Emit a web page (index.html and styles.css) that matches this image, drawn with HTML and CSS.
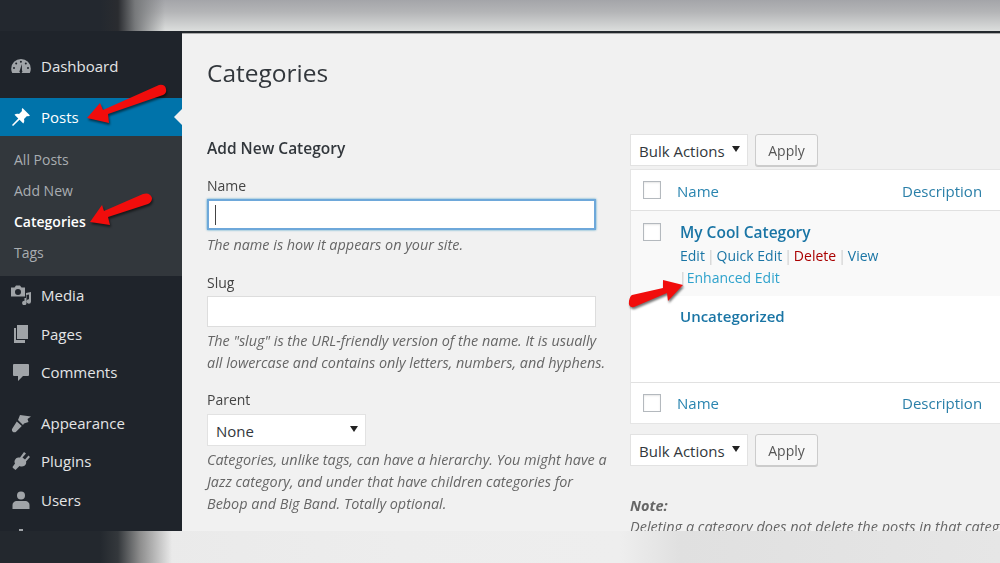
FILE: index.html
```html
<!DOCTYPE html>
<html lang="en">
<head>
<meta charset="utf-8">
<title>Categories</title>
<link rel="stylesheet" href="styles.css">
</head>
<body>
<div class="frame">
  <div class="band band-top"></div>
  <div class="app">
    <aside class="side">
      <ul class="menu menu-a">
        <li class="item"><svg class="ic" viewBox="0 0 20 20"><path fill-rule="evenodd" d="M10 3a9.800 9.800 0 0 0-9.800 9.800c0 1.600.4 3 1 4.200h17.600c.6-1.200 1-2.600 1-4.200A9.800 9.800 0 0 0 10 3zM9.900 4.800a1 1 0 1 1 0 2 1 1 0 0 1 0-2zM5.200 6.600a1 1 0 1 1 0 2 1 1 0 0 1 0-2zm9.600 0a1 1 0 1 1 0 2 1 1 0 0 1 0-2zM3 11a1 1 0 1 1 0 2 1 1 0 0 1 0-2zm14 0a1 1 0 1 1 0 2 1 1 0 0 1 0-2zM10.800 8l.2 6.500a1.500 1.500 0 1 1-2.200 0z"/></svg>Dashboard</li>
      </ul>
      <div class="active"><svg class="ic" viewBox="0 0 20 20"><path d="M11.500 1 19 8.500c-1 .8-2.200.8-3 .5l-3 3c.6 2 .2 3.400-.7 4.500L8.500 12.700 2 19l-1-1 6.300-6.500L3.500 7.700c1.100-.9 2.500-1.300 4.500-.7l3-3c-.3-.8-.3-2 .500-3z"/></svg>Posts</div>
      <ul class="sub">
        <li>All Posts</li>
        <li>Add New</li>
        <li class="cur">Categories</li>
        <li>Tags</li>
      </ul>
      <ul class="menu menu-b">
        <li class="item"><svg class="ic" viewBox="0 0 20 20"><path fill-rule="evenodd" d="M0 2.500h3.500L5 .5h4l1.500 2H14v9H0zM7 4a3 3 0 1 0 0 6 3 3 0 0 0 0-6zM20 7v9.500a2.200 2.200 0 1 1-2-2.200V9.500l-2.500.5v8a2.200 2.200 0 1 1-2-2.200V13H15V8z"/></svg>Media</li>
        <li class="item"><svg class="ic" viewBox="0 0 20 20"><path d="M6 1h11v14H6zM3 4h2v12h9v3H3z"/></svg>Pages</li>
        <li class="item"><svg class="ic" viewBox="0 0 20 20"><path d="M3 2h14a1 1 0 0 1 1 1v10a1 1 0 0 1-1 1h-5l-5 5v-5H3a1 1 0 0 1-1-1V3a1 1 0 0 1 1-1z"/></svg>Comments</li>
      </ul>
      <ul class="menu menu-c">
        <li class="item"><svg class="ic" viewBox="0 0 20 20"><path d="M9 2l11 1.500-3.500 2.500 1 3-4.500 1.500-1 1.500-5-5zM5.800 8.500l5 4.500-1.500 1.500-4.500 4.500c-1 .6-2.500.4-3.300-.5-.8-1-.8-2.200 0-3.200z"/></svg>Appearance</li>
        <li class="item"><svg class="ic" viewBox="0 0 20 20"><path d="M13 1l2 1.500-3.500 4 2.500 2 3.500-4L19 6l-4 4.500c.5 1.500 0 3-1.500 4.300-1.500 1-3.500 1-5 .2L4.500 19 2 17l-.5-1L4 12.500c-1-1.500-.5-3.500 1-5 1-1 2.500-1.200 4-1z"/></svg>Plugins</li>
        <li class="item"><svg class="ic" viewBox="0 0 20 20"><circle cx="10" cy="5.500" r="4"/><path d="M1.500 19v-4c0-2 1.500-3.500 3.500-4h10c2 .5 3.500 2 3.500 4v4z"/></svg>Users</li>
        <li class="item"><svg class="ic" viewBox="0 0 20 20"><path d="M8 1h4v4H8zM4 5h12v14H4z"/></svg></li>
      </ul>
    </aside>
    <main class="content">
      <h1 class="title">Categories</h1>
      <div class="cols">
        <section class="form">
          <h2 class="form-head">Add New Category</h2>
          <div class="field">
            <label class="lbl">Name</label>
            <div class="input focus"><span class="caret"></span></div>
            <p class="hint hint-name">The name is how it appears on your site.</p>
          </div>
          <div class="field field-slug">
            <label class="lbl">Slug</label>
            <div class="input"></div>
            <p class="hint">The "slug" is the URL-friendly version of the name. It is usually all lowercase and contains only letters, numbers, and hyphens.</p>
          </div>
          <div class="field">
            <label class="lbl">Parent</label>
            <div class="select parent">None<span class="tri"></span></div>
            <p class="hint">Categories, unlike tags, can have a hierarchy. You might have a Jazz category, and under that have children categories for Bebop and Big Band. Totally optional.</p>
          </div>
        </section>
        <section class="list">
          <div class="bulk">
            <div class="select bulk-sel">Bulk Actions<span class="tri"></span></div>
            <div class="btn">Apply</div>
          </div>
          <div class="table">
            <div class="row head"><span class="cb"></span><span class="col-name">Name</span><span class="col-desc">Description</span></div>
            <div class="row cat hl">
              <span class="cb"></span>
              <div class="cat-body">
                <a class="cat-name">My Cool Category</a>
                <div class="acts first"><a>Edit</a><i>|</i><a>Quick Edit</a><i>|</i><a class="del">Delete</a><i>|</i><a>View</a></div>
                <div class="acts"><i class="lead">|</i><a class="light">Enhanced Edit</a></div>
              </div>
            </div>
            <div class="row cat plain">
              <div class="cat-body"><a class="cat-name">Uncategorized</a></div>
            </div>
            <div class="row foot"><span class="cb"></span><span class="col-name">Name</span><span class="col-desc">Description</span></div>
          </div>
          <div class="bulk bulk-2">
            <div class="select bulk-sel">Bulk Actions<span class="tri"></span></div>
            <div class="btn">Apply</div>
          </div>
          <p class="note"><b>Note:</b><br>Deleting a category does not delete the posts in that category. Instead, posts that were only assigned</p>
        </section>
      </div>
    </main>
    <svg class="arrow a1" viewBox="0 0 90 50"><path d="M7 38 20 23l3 7L79 5q6-1 7 4 1 4-3 6L28 34l1 9z"/></svg>
    <svg class="arrow a2" viewBox="0 0 70 40"><path d="M5 32 17 15l2 6L58 4q7-2 9 4 0 4-4 6L23 27l2 8z"/></svg>
    <svg class="arrow a3" viewBox="0 0 60 34"><path d="M4 15 35 8V0l20 5-15 16-1-8L6 27q-6 1-5-6 1-5 3-6z"/></svg>
  </div>
  <div class="band band-bottom"></div>
</div>
</body>
</html>
```
FILE: styles.css
```css
* { box-sizing: border-box; }
html, body { margin: 0; padding: 0; }
body { width: 1000px; height: 563px; overflow: hidden; background: #f1f1f1; font-family: "Open Sans", "Noto Sans", sans-serif; font-size: 14px; color: #444; }
ul { list-style: none; margin: 0; padding: 0; }
h1, h2, p { margin: 0; font-weight: 400; }
.frame { width: 1000px; height: 563px; display: flex; flex-direction: column; }
.band { flex: none; }
.band-top { height: 31px; background: linear-gradient(90deg, #23282f 0, #23282f 100px, #2a2c30 118px, #77797b 135px, rgba(150,152,154,0) 165px), linear-gradient(180deg, #a4a5a9 0, #b4b5b7 12px, #dcdedd 31px); }
.band-bottom { height: 32px; background: linear-gradient(90deg, #23282e 0, #23282e 100px, #34383c 118px, #8d8d8d 140px, rgba(232,232,232,0) 172px), linear-gradient(90deg, #e8e8e8 0, #ededed 400px, #eeeeee 620px, #e0e0e0 680px, #e6e6e6 1000px); }
.app { flex: none; height: 500px; display: flex; position: relative; overflow: hidden; filter: blur(.4px); }
.side { flex: none; width: 182px; overflow: hidden; background: #1f242b; color: #e4e5e6; font-size: 15px; }
.item, .active { display: flex; align-items: center; gap: 10px; height: 38.500px; padding-left: 11px; }
.ic { flex: none; width: 20px; height: 20px; fill: #a0a4a8; }
.menu-a { padding-top: 16px; padding-bottom: 12.500px; }
.active { position: relative; height: 38px; background: #0073aa; color: #fff; }
.active .ic { fill: #fff; }
.active::after { content: ""; position: absolute; right: 0; top: 11px; border: 8px solid transparent; border-right-color: #f1f1f1; border-left-width: 0; }
.sub { background: #32373c; color: #a9adb1; font-size: 14px; height: 140px; padding: 8px 0 0 14px; }
.sub li { height: 31px; line-height: 31px; }
.sub .cur { color: #fff; font-weight: 600; }
.menu-c { padding-top: 12px; }
.content { flex: 1; min-width: 0; border-top: 2px solid #23282d; box-shadow: inset 0 1px 0 #aaa; padding: 0 0 0 25px; overflow: hidden; }
.title { font-size: 24.500px; color: #32373c; line-height: 30px; margin-top: 25px; }
.cols { display: flex; gap: 20px; margin-top: 44px; width: 900px; }
.form { flex: none; width: 403px; }
.form-head { font-size: 15.500px; font-weight: 600; color: #32373c; line-height: 20px; margin-top: 6px; }
.field { margin-bottom: 17px; }
.field-slug { margin-bottom: 16px; }
.lbl { display: block; font-size: 14px; line-height: 20px; color: #444; }
.form-head + .field { margin-top: 18px; }
.input { width: 389px; height: 31px; margin-top: 3px; background: #fff; border: 1px solid #ddd; padding: 5px 7px; }
.input.focus { border: 2px solid #6ea8da; box-shadow: 0 0 2px rgba(30,140,190,.8); padding: 4px 6px; }
.caret { display: block; width: 1px; height: 20px; background: #444; }
.hint { font-style: italic; font-size: 14.400px; line-height: 22px; color: #666; margin-top: 3px; }
.hint-name { margin-top: 4px; }
.select { position: relative; height: 32px; background: #fff; border: 1px solid #e2e2e2; color: #32373c; display: flex; align-items: center; padding: 2px 0 0 8px; font-size: 15px; }
.parent { width: 159px; margin-top: 4px; }
.tri { position: absolute; right: 7px; top: 11px; border: 4px solid transparent; border-top: 6px solid #222; border-bottom-width: 0; }
.list { flex: none; width: 480px; margin-top: 2px; }
.bulk { display: flex; gap: 7px; height: 32px; }
.bulk-sel { width: 118px; }
.btn { width: 63px; height: 32px; background: #f7f7f7; border: 1px solid #ccc; border-radius: 3px; box-shadow: 0 1px 0 #ccc; text-align: center; line-height: 31px; color: #555; font-size: 14px; }
.table { margin-top: 3px; background: #fff; border: 1px solid #e5e5e5; border-right: 0; height: 255px; display: flex; flex-direction: column; }
.row { position: relative; display: flex; }
.head, .foot { height: 41px; align-items: center; padding-left: 12px; font-size: 15px; }
.head { border-bottom: 1px solid #e1e1e1; }
.head .col-name, .head .col-desc { margin-top: 2px; }
.foot { border-top: 1px solid #e1e1e1; margin-top: auto; }
.cb { flex: none; width: 18px; height: 18px; background: #fff; border: 1px solid #b4b9be; box-shadow: inset 0 1px 2px rgba(0,0,0,.1); }
.col-name { margin-left: 16px; width: 225px; color: #2a85b0; }
.col-desc { color: #2a7fa8; }
.cat { padding-left: 12px; }
.hl { height: 85px; background: #f9f9f9; padding-top: 11px; }
.hl .cb { margin-top: 1px; }
.plain { padding-top: 10px; padding-left: 38px; }
.cat-body { margin-left: 19px; }
.plain .cat-body { margin-left: 11px; }
.cat-name { display: block; font-size: 15.500px; font-weight: 600; color: #1a75a5; line-height: 20px; }
.plain .cat-name { font-size: 15px; }
.acts { font-size: 14px; line-height: 22px; color: #1a75a5; }
.first { margin-top: 3px; }
.acts i { font-style: normal; color: #ccc; margin: 0 2px; }
.acts .lead { margin: 0 0 0 -1px; }
.del { color: #a00; }
.light { color: #2ea2cc; }
.bulk-2 { margin-top: 10px; }
.note { margin-top: 29px; font-size: 14.500px; font-style: italic; line-height: 21px; color: #666; white-space: nowrap; }
.arrow { position: absolute; fill: #f10d0c; filter: drop-shadow(1px 2px 1px rgba(0,0,0,.55)); }
.a1 { left: 80px; top: 49px; width: 90px; height: 50px; }
.a2 { left: 85px; top: 159px; width: 70px; height: 40px; }
.a3 { left: 628px; top: 249px; width: 60px; height: 34px; }
```
